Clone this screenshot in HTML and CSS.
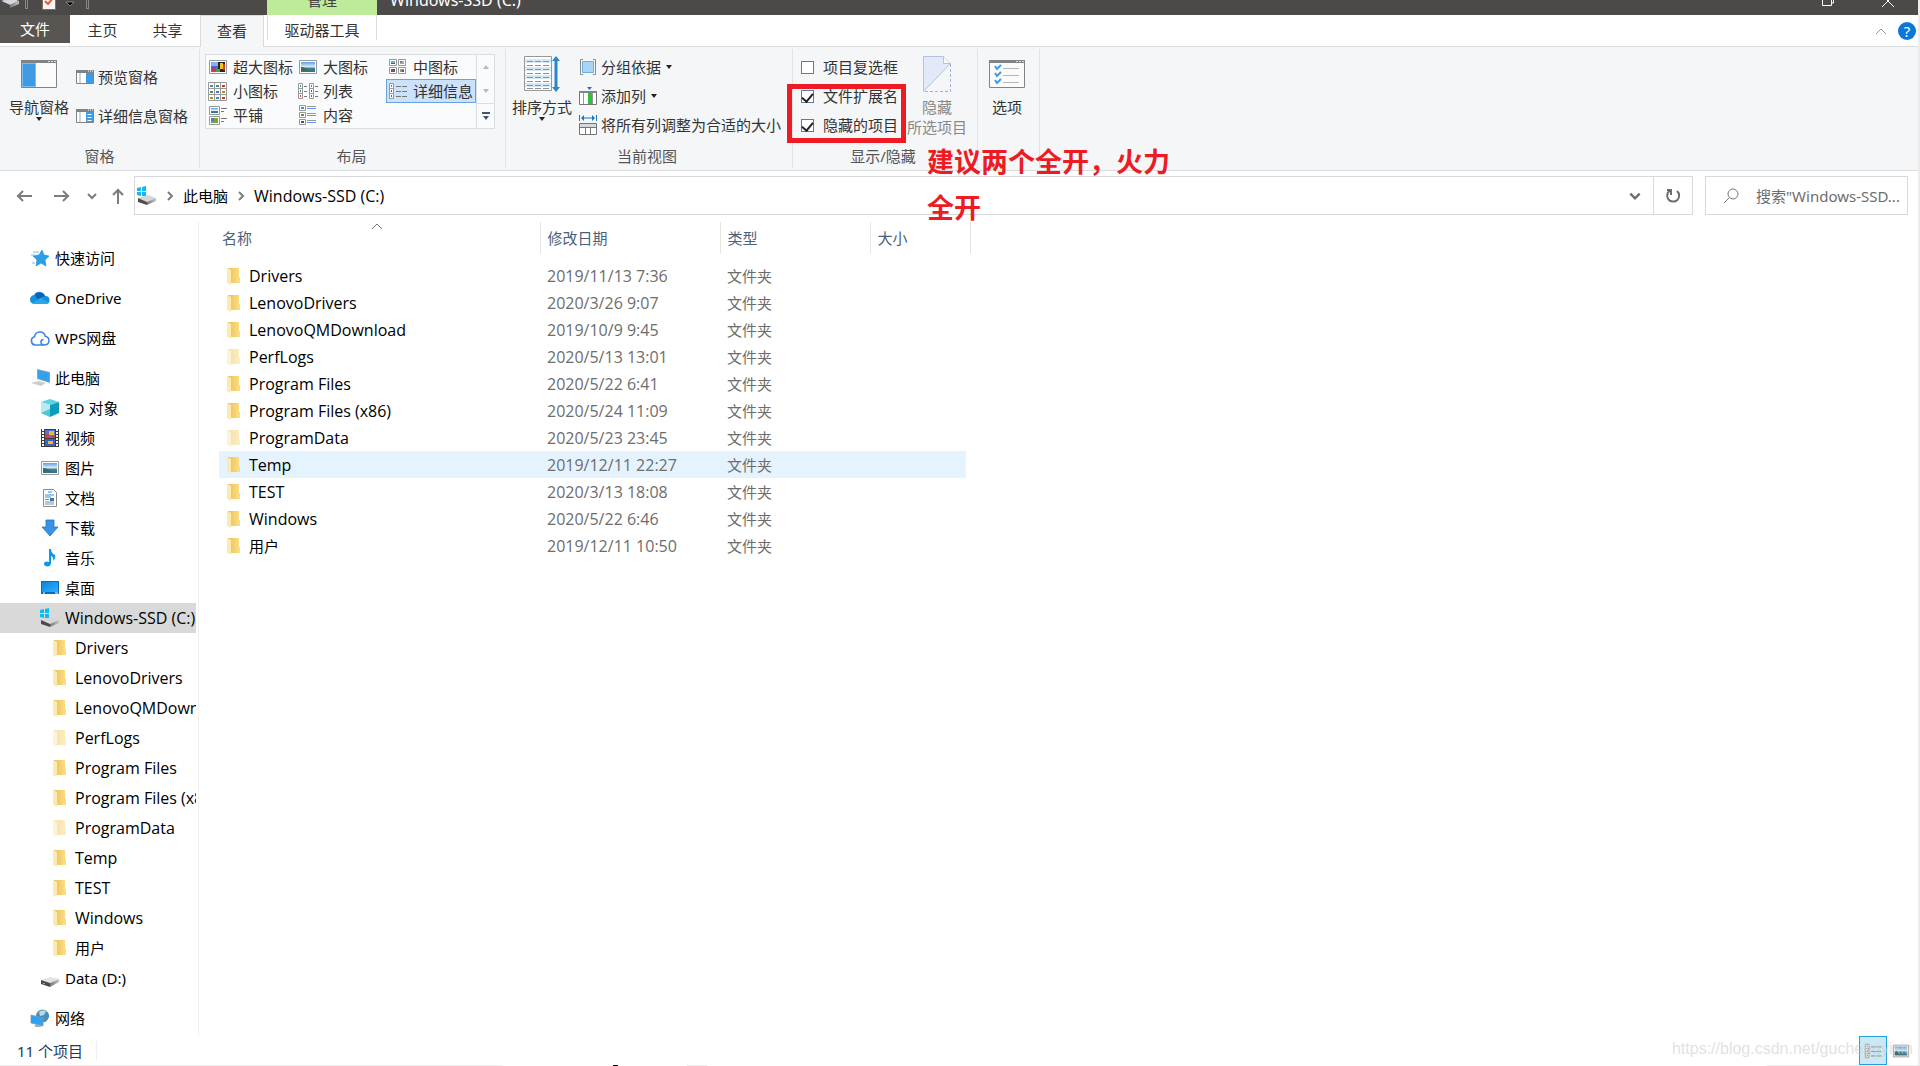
FILE: index.html
```html
<!DOCTYPE html>
<html lang="zh-CN">
<head>
<meta charset="utf-8">
<title>Windows-SSD (C:)</title>
<link rel="stylesheet" href="styles.css">
</head>
<body>
<svg class="sprite" aria-hidden="true">
  <defs>
    <linearGradient id="gFold" x1="0" x2="1"><stop offset="0" stop-color="#e9c35c"/><stop offset="1" stop-color="#fbdc80"/></linearGradient>
    <linearGradient id="gSky" x1="0" y1="0" x2="0" y2="1"><stop offset="0" stop-color="#5aa0e6"/><stop offset=".5" stop-color="#dff0fa"/><stop offset=".6" stop-color="#4d7f86"/><stop offset="1" stop-color="#2f6f9c"/></linearGradient>
    <linearGradient id="gDrive" x1="0" x2="1"><stop offset="0" stop-color="#777"/><stop offset="1" stop-color="#c4c4c4"/></linearGradient>
    <linearGradient id="gBlue" x1="0" y1="0" x2="1" y2="1"><stop offset="0" stop-color="#0a84e0"/><stop offset="1" stop-color="#2fb0ff"/></linearGradient>
  </defs>
  <symbol id="folder" viewBox="0 0 20 20"><path d="M4 2h11v15H7z" fill="url(#gFold)"/><path d="M13 11h3v6h-3z" fill="#fbdc80"/><path d="M3 2l4 2v15l-4-2z" fill="#fdeab0"/></symbol>
  <symbol id="drive" viewBox="0 0 20 20"><path d="M1 12l9-3 9 2-9 4z" fill="#e2e3e6"/><path d="M1 12l9 3v4l-9-3z" fill="#4b4b4b"/><path d="M10 15l9-4v3l-9 5z" fill="url(#gDrive)"/><path d="M3 15h2v1H3z" fill="#3fe06a"/></symbol>
  <symbol id="drivewin" viewBox="0 0 20 20"><path d="M1 12l10-3 8 3-9 4z" fill="#d4d6da"/><path d="M1 12l9 4v3l-9-3z" fill="#4b4b4b"/><path d="M10 16l9-4v3l-9 4z" fill="url(#gDrive)"/><path d="M0 2l4-1v4H0zM5 1l4-1v5H5zM0 6h4v4l-4-1zM5 6h4v4H5z" fill="#0bbcf2"/></symbol>
  <symbol id="star" viewBox="0 0 20 20"><path d="M12 2l2 5 5 1-4 4 1 6-5-3-5 3 1-6-4-4 6-1z" fill="#2d9fe8" stroke="#1585cf" stroke-width=".6"/><path d="M3 4h6M1 7h4M2 15h3" stroke="#6dbdf0"/></symbol>
  <symbol id="onedrive" viewBox="0 0 20 20"><path d="M5 16a4.500 4.500 0 01-1-9 6 6 0 0111 1 4 4 0 011 8z" fill="#1490df"/><path d="M5 7a6 6 0 0110 1l-8 3z" fill="#0b5fb4"/><path d="M2 15l9-5 8 5a4 4 0 01-3 1H5z" fill="#28a8ea"/></symbol>
  <symbol id="wps" viewBox="0 0 20 20"><path d="M15 17H5a4.200 4.200 0 01-.5-8.200 5.500 5.500 0 0110.800-.5 4.400 4.400 0 01-.3 8.700c-3 0-4-1.500-4-3s1-2.500 2.500-2.500" fill="none" stroke="#3f83f0" stroke-width="1.600"/></symbol>
  <symbol id="pc" viewBox="0 0 20 20"><path d="M7 1l13 3v11L7 11z" fill="#8fa3b3"/><path d="M8 2l11 3v9L8 10z" fill="#30a3f0"/><path d="M1 15l8-2 7 2-5 3z" fill="#c9ced3"/></symbol>
  <symbol id="cube" viewBox="0 0 20 20"><path d="M1 4l9-3 9 3-9 3z" fill="#5fd3e0"/><path d="M1 4l9 3v12l-9-4z" fill="#b5ecf0"/><path d="M10 7l9-3v11l-9 4z" fill="#0d9cc0"/><path d="M1 15l9-4v8z" fill="#4fc8d4"/></symbol>
  <symbol id="film" viewBox="0 0 20 20"><path d="M1 1h18v18H1z" fill="#3a3a3a"/><path d="M3 1v18M17 1v18" stroke="#fff" stroke-width="2" stroke-dasharray="2 1"/><path d="M5 2h10v8H5z" fill="#4a78d8"/><path d="M5 11h10v7H5z" fill="#3b62c4"/><path d="M9 3h5v4H9zM8 13h5v3H8z" fill="#f0bb2b"/><path d="M5 6h4v3H5zM12 8h3v2h-3z" fill="#c43e55"/></symbol>
  <symbol id="pic" viewBox="0 0 20 20"><path d="M1.500 3.500h17v13h-17z" fill="#fff" stroke="#999"/><path d="M3 5h14v10H3z" fill="url(#gSky)"/><path d="M3 10q5 0 8 4H3z" fill="#3c6e5c"/></symbol>
  <symbol id="doc" viewBox="0 0 20 20"><path d="M3.500 1.500h10l3 3v14h-13z" fill="#fff" stroke="#8a8a8a"/><path d="M5 14h9M5 16h9M5 11.500h4" stroke="#7c8c9c"/><path d="M8 4h4M5 7h9M5 9h6" stroke="#2f8fd8"/><path d="M10 10h4v3h-4z" fill="#3576b5"/></symbol>
  <symbol id="down" viewBox="0 0 20 20"><path d="M6 2h8v7h4l-8 9-8-9h4z" fill="#3793e4" stroke="#2274bf" stroke-width=".8"/></symbol>
  <symbol id="note" viewBox="0 0 20 20"><path d="M9 1h2q0 4 4 6c1 3-1 5-2 6q1-4-2-5v7c0 5-7 4-7 1s3-3 5-2z" fill="#0a97ef"/></symbol>
  <symbol id="desk" viewBox="0 0 20 20"><path d="M1 3h18v13H1z" fill="#0a6cb8"/><path d="M2 4h16v10H2z" fill="url(#gBlue)"/><path d="M3 15h2M15 15h3" stroke="#fff"/></symbol>
  <symbol id="net" viewBox="0 0 20 20"><circle cx="12.500" cy="8" r="6.500" fill="#4d8fb0"/><path d="M9 4q3-3 7-1l-2 4-4 1z" fill="#b6dbe8"/><path d="M1 7l12 3v8L1 15z" fill="#2fa3f2" stroke="#7d98ab" stroke-width=".8"/><path d="M5 18h6" stroke="#aaa" stroke-width="2"/></symbol>
  <symbol id="pPrev" viewBox="0 0 18 14"><path d="M.5.5h17v13H.5z" fill="#fff" stroke="#808488"/><path d="M0 0h18v3H0z" fill="#808488"/><path d="M4 3v10" stroke="#a8a8a8"/><path d="M10 3h7v10h-7z" fill="#3f9ae4"/><path d="M12 1h1M14 1h1M16 1h1" stroke="#fff"/></symbol>
  <symbol id="pDet" viewBox="0 0 18 14"><use href="#pPrev"/><path d="M11.500 5.500h4M11.500 8.500h4M11.500 11.500h4" stroke="#fff"/></symbol>
  <symbol id="nav" viewBox="0 0 36 28"><path d="M.5.5h35v27H.5z" fill="#fbfbfb" stroke="#808488"/><path d="M0 0h36v3H0z" fill="#808488"/><path d="M1 3h14v24H1z" fill="#7dbdf0"/><path d="M2 4h12v22H2z" fill="#3f9ae4"/><path d="M27 1.500h2M30 1.500h2M33 1.500h2" stroke="#ddd"/></symbol>
  <symbol id="vXl" viewBox="0 0 20 20"><path d="M1.500 3.500h17v13h-17z" fill="#fff" stroke="#999"/><path d="M3 5h14v10H3z" fill="#3d6fd8"/><path d="M3 5h7v4H3z" fill="#7fb4ee"/><path d="M10 5h7v10h-7z" fill="#2b2320"/><path d="M12 6h3v6h-3z" fill="#f6c21c"/><path d="M3 10h5v4H3z" fill="#c43a62"/><path d="M8 12h4v3H8z" fill="#41a44a"/><path d="M15 7h2v6h-2z" fill="#cf3b22"/></symbol>
  <symbol id="vMd" viewBox="0 0 20 20"><path d="M1.500 2.500h7v6h-7zM10.500 2.500h7v6h-7zM1.500 10.500h7v6h-7zM10.500 10.500h7v6h-7z" fill="#fff" stroke="#999"/><path d="M3 4h4v3H3z" fill="#6fb0d4"/><path d="M3 6h4v1H3z" fill="#35677a"/><path d="M12 4h4v3h-4z" fill="#a9b84c"/><path d="M12 4h2v2h-2z" fill="#5c8ae0"/><path d="M3 12h4v3H3z" fill="#c8362a"/><path d="M12 12h4v3h-4z" fill="#d08c28"/><path d="M5 12h2v2H5zM14 13h2v2h-2z" fill="#3d55b8"/></symbol>
  <symbol id="vSm" viewBox="0 0 20 20"><path d="M.5 1.500h18v18H.5zM6.500 1v18M12.500 1v18M0 7.500h18M0 13.500h18" fill="#fff" stroke="#999"/><path d="M2 4h3v2H2zM8 16h3v2H8z" fill="#3f8fb8"/><path d="M8 4h3v2H8zM2 10h3v2H2z" fill="#4f8f6c"/><path d="M14 4h3v2h-3zM14 16h3v2h-3z" fill="#c8362a"/><path d="M8 10h3v2H8z" fill="#4a78d8"/><path d="M14 10h3v2h-3zM2 16h3v2H2z" fill="#a89028"/></symbol>
  <symbol id="vLs" viewBox="0 0 20 20"><path d="M.5 2.500h4v15h-4zM11.500 2.500h4v15h-4zM0 7.500h5M0 12.500h5M11 7.500h5M11 12.500h5" fill="#fff" stroke="#999"/><path d="M2 4h1v2H2zM13 4h1v2h-1z" fill="#3f8fb8"/><path d="M2 9h1v2H2zM13 9h1v2h-1z" fill="#457a3c"/><path d="M2 14h1v2H2zM13 14h1v2h-1z" fill="#c8362a"/><path d="M6 5.500h3M6 10.500h3M6 15.500h3M17 5.500h3M17 10.500h3M17 15.500h3" stroke="#777"/></symbol>
  <symbol id="vDt" viewBox="0 0 20 20"><path d="M1.500 2.500h4v15h-4zM1 7.500h5M1 12.500h5" fill="#fff" stroke="#999"/><path d="M3 4h1v2H3z" fill="#3f8fb8"/><path d="M3 9h1v2H3z" fill="#457a3c"/><path d="M3 14h1v2H3z" fill="#c8362a"/><path d="M8 5.500h5M14 5.500h5M8 10.500h5M14 10.500h5M8 15.500h5M14 15.500h5" stroke="#777"/></symbol>
  <symbol id="vTl" viewBox="0 0 20 20"><path d="M1.500 1.500h10v8h-10zM1.500 11.500h10v8h-10z" fill="#fff" stroke="#999"/><path d="M3 3h7v5H3z" fill="url(#gSky)"/><path d="M3 13h7v5H3z" fill="#7aa53a"/><path d="M3 13h3v3H3z" fill="#4a78d8"/><path d="M13 3.500h6M13 6.500h3M13 13.500h6M13 16.500h3" stroke="#777"/></symbol>
  <symbol id="vCt" viewBox="0 0 20 20"><path d="M1.500.500h6v5h-6zM1.500 7.500h6v5h-6zM1.500 14.500h6v5h-6z" fill="#fff" stroke="#999"/><path d="M3 2h3v2H3z" fill="#3f8fb8"/><path d="M3 9h3v2H3z" fill="#7a8f3c"/><path d="M3 16h3v2H3z" fill="#35577a"/><path d="M9 3.500h9M9 10.500h9M9 17.500h9" stroke="#5c9cf0"/><path d="M9 1.500h9M9 8.500h9M9 15.500h9" stroke="#999"/></symbol>
  <symbol id="sort" viewBox="0 0 38 36"><path d="M1.500.5h27v34h-27z" fill="#fff" stroke="#999"/><path d="M2 3h26v4H2zM2 11h26v4H2zM2 19h26v4H2zM2 27h26v4H2z" fill="#d5e9f5"/><path d="M4 5.500h22M4 9.500h22M4 13.500h22M4 17.500h22M4 21.500h22M4 25.500h22M4 29.500h22M4 32.500h22" stroke="#8b9299" stroke-dasharray="6 2"/><path d="M33 2v31" stroke="#2b86cf" stroke-width="3"/><path d="M33 0l4 5h-8zM33 36l4-5h-8z" fill="#2b86cf"/></symbol>
  <symbol id="grp" viewBox="0 0 20 20"><path d="M5 2.500H2.500v15H5M15 2.500h2.500v15H15" fill="none" stroke="#8a8a8a"/><path d="M4.500 4.500h11v11h-11z" fill="#a8d4f5" stroke="#6fb0e3"/></symbol>
  <symbol id="addc" viewBox="0 0 20 20"><path d="M1.500 5.500h17v13h-17z" fill="#fff" stroke="#777"/><path d="M1 5h18v2H1z" fill="#808488"/><path d="M5.500 7v11M14.500 7v11" stroke="#999"/><path d="M10 7h4v11h-4z" fill="#2cc23c"/><path d="M9 1h5l-2.500 3z" fill="#2274b8"/></symbol>
  <symbol id="fitc" viewBox="0 0 20 20"><path d="M1.500 0v6M18.500 0v6M4 3h12" stroke="#2274b8"/><path d="M3 3l3-3v6zM17 3l-3-3v6z" fill="#2274b8"/><path d="M1.500 8.500h17v11h-17zM7.500 12v7M12.500 12v7" fill="#fff" stroke="#777"/><path d="M2 9h16v3H2z" fill="#d6d8da"/><path d="M1 12.500h18" stroke="#777"/></symbol>
  <symbol id="hide" viewBox="0 0 28 36"><path d="M.5.5h20l7 7-27 28z" fill="#e2e9f8" stroke="#b3c3e0"/><path d="M20.500.5v7h7" fill="#f5f8fd" stroke="#b3c3e0"/><path d="M27.500 8v27.500H1" fill="none" stroke="#9fb0d0" stroke-dasharray="3 2"/></symbol>
  <symbol id="opt" viewBox="0 0 36 28"><path d="M.5.5h35v27H.5z" fill="#fbfbfb" stroke="#808488"/><path d="M0 0h36v3H0z" fill="#808488"/><path d="M27 1.500h2M30 1.500h2M33 1.500h2" stroke="#ddd"/><path d="M6 6l2 3 4-4M6 13l2 3 4-4M6 20l2 3 4-4" fill="none" stroke="#3f9ae4" stroke-width="2"/><path d="M14 8.500h16M14 15.500h16M14 22.500h16" stroke="#b5b5b5"/></symbol>
  <symbol id="chev" viewBox="0 0 12 12"><path d="M2 4l4 4 4-4" fill="none" stroke="currentColor" stroke-width="2"/></symbol>
  <symbol id="up" viewBox="0 0 12 8"><path d="M1 7l5-5 5 5" fill="none" stroke="currentColor"/></symbol>
  <symbol id="crumb" viewBox="0 0 12 12"><path d="M4 2l4 4-4 4" fill="none" stroke="currentColor" stroke-width="2"/></symbol>
</svg>

<div class="window">
  <header class="titlebar">
    <svg class="tb-drive" viewBox="0 0 20 20"><use href="#drivewin"/></svg>
    <span class="tb-sep"></span>
    <svg class="tb-clip" viewBox="0 0 14 16"><path d="M0 0h14v16H0z" fill="#8b6a55"/><path d="M1 0h12v15H1z" fill="#f6f6f6"/><path d="M3 7l3 3 5-6" fill="none" stroke="#f0562a" stroke-width="2"/></svg>
    <svg class="tb-more" viewBox="0 0 8 8"><path d="M1 0h6M0 3h8L4 7z" fill="#000" stroke="#ddd" stroke-width=".5"/></svg>
    <span class="tb-sep"></span>
    <span class="tb-context">管理</span>
    <h1 class="tb-title">Windows-SSD (C:)</h1>
    <button class="tb-btn" aria-label="还原"><svg viewBox="0 0 12 12"><path d="M.5 2.500h9v9h-9zM2 .5h9.500V9H10" fill="none" stroke="#fff"/></svg></button>
    <button class="tb-btn" aria-label="关闭"><svg viewBox="0 0 12 12"><path d="M0 0l12 12M12 0L0 12" stroke="#fff"/></svg></button>
  </header>

  <nav class="tabs">
    <button class="tab file">文件</button>
    <button class="tab home">主页</button>
    <button class="tab">共享</button>
    <button class="tab active">查看</button>
    <button class="tab context">驱动器工具</button>
    <button class="collapse" aria-label="折叠功能区"><svg viewBox="0 0 12 8"><use href="#up"/></svg></button>
    <button class="help" aria-label="帮助">?</button>
  </nav>

  <section class="ribbon">
    <div class="group g-panes">
      <div class="group-body">
        <button class="big"><svg class="i36" viewBox="0 0 36 28"><use href="#nav"/></svg><span>导航窗格</span><i class="caret"></i></button>
        <div class="stack panes">
          <button class="cmd"><svg class="i18" viewBox="0 0 18 14"><use href="#pPrev"/></svg>预览窗格</button>
          <button class="cmd"><svg class="i18" viewBox="0 0 18 14"><use href="#pDet"/></svg>详细信息窗格</button>
        </div>
      </div>
      <h2>窗格</h2>
    </div>
    <div class="group g-layout">
      <div class="group-body">
        <div class="gallery">
          <div class="views">
            <button><svg><use href="#vXl"/></svg>超大图标</button>
            <button><svg><use href="#pic"/></svg>大图标</button>
            <button><svg><use href="#vMd"/></svg>中图标</button>
            <button><svg><use href="#vSm"/></svg>小图标</button>
            <button><svg><use href="#vLs"/></svg>列表</button>
            <button class="on"><svg><use href="#vDt"/></svg>详细信息</button>
            <button><svg><use href="#vTl"/></svg>平铺</button>
            <button><svg><use href="#vCt"/></svg>内容</button>
          </div>
          <div class="scroller">
            <button aria-label="上一行"><i class="caret flip dim"></i></button>
            <button aria-label="下一行"><i class="caret dim"></i></button>
            <button aria-label="更多" class="more"><i class="caret"></i></button>
          </div>
        </div>
      </div>
      <h2>布局</h2>
    </div>
    <div class="group g-view">
      <div class="group-body">
        <button class="big sort"><svg class="i38" viewBox="0 0 38 36"><use href="#sort"/></svg><span>排序方式</span><i class="caret"></i></button>
        <div class="stack">
          <button class="cmd"><svg class="i20"><use href="#grp"/></svg>分组依据<i class="caret"></i></button>
          <button class="cmd"><svg class="i20"><use href="#addc"/></svg>添加列<i class="caret"></i></button>
          <button class="cmd"><svg class="i20"><use href="#fitc"/></svg>将所有列调整为合适的大小</button>
        </div>
      </div>
      <h2>当前视图</h2>
    </div>
    <div class="group g-show">
      <div class="group-body">
        <div class="stack checks">
          <label><input type="checkbox">项目复选框</label>
          <label><input type="checkbox" checked>文件扩展名</label>
          <label><input type="checkbox" checked>隐藏的项目</label>
          <div class="mark-box"></div>
        </div>
        <button class="big hide" disabled><svg class="i28" viewBox="0 0 28 36"><use href="#hide"/></svg><span>隐藏<br>所选项目</span></button>
      </div>
      <h2>显示/隐藏</h2>
      <p class="mark-note">建议两个全开，火力<br>全开</p>
    </div>
    <div class="group g-opt">
      <div class="group-body">
        <button class="big"><svg class="i36" viewBox="0 0 36 28"><use href="#opt"/></svg><span>选项</span></button>
      </div>
    </div>
  </section>

  <div class="addressbar">
    <div class="history">
      <button aria-label="后退"><svg viewBox="0 0 16 16"><path d="M16 8H1M7 3L2 8l5 5" fill="none" stroke="currentColor" stroke-width="2"/></svg></button>
      <button aria-label="前进"><svg viewBox="0 0 16 16"><path d="M0 8h15M9 3l5 5-5 5" fill="none" stroke="currentColor" stroke-width="2"/></svg></button>
      <button class="small" aria-label="最近位置"><svg viewBox="0 0 12 12"><use href="#chev"/></svg></button>
      <button aria-label="上移"><svg viewBox="0 0 16 16"><path d="M8 16V1M3 7l5-5 5 5" fill="none" stroke="currentColor" stroke-width="2"/></svg></button>
    </div>
    <div class="path">
      <svg class="i20"><use href="#drivewin"/></svg>
      <svg class="sep"><use href="#crumb"/></svg>
      <a href="#">此电脑</a>
      <svg class="sep"><use href="#crumb"/></svg>
      <a class="latin" href="#">Windows-SSD (C:)</a>
      <button class="drop" aria-label="以前的位置"><svg viewBox="0 0 12 12"><use href="#chev"/></svg></button>
      <button class="refresh" aria-label="刷新"><svg viewBox="0 0 16 16"><path d="M12 3a6 6 0 11-7-.5M2 2h4v5" fill="none" stroke="currentColor" stroke-width="2"/></svg></button>
    </div>
    <label class="search">
      <svg viewBox="0 0 16 16"><circle cx="10" cy="6" r="5" fill="none" stroke="#777"/><path d="M6 10l-5 5" stroke="#777"/></svg>
      <input type="text" aria-label="搜索" placeholder="搜索&quot;Windows-SSD...">
    </label>
  </div>

  <main class="content">
    <nav class="tree">
      <a class="l1" href="#"><svg><use href="#star"/></svg>快速访问</a>
      <a class="l1" href="#"><svg><use href="#onedrive"/></svg>OneDrive</a>
      <a class="l1" href="#"><svg><use href="#wps"/></svg>WPS网盘</a>
      <a class="l1" href="#"><svg><use href="#pc"/></svg>此电脑</a>
      <a class="l2" href="#"><svg><use href="#cube"/></svg>3D 对象</a>
      <a class="l2" href="#"><svg><use href="#film"/></svg>视频</a>
      <a class="l2" href="#"><svg><use href="#pic"/></svg>图片</a>
      <a class="l2" href="#"><svg><use href="#doc"/></svg>文档</a>
      <a class="l2" href="#"><svg><use href="#down"/></svg>下载</a>
      <a class="l2" href="#"><svg><use href="#note"/></svg>音乐</a>
      <a class="l2" href="#"><svg><use href="#desk"/></svg>桌面</a>
      <a class="l2 latin current" href="#"><svg><use href="#drivewin"/></svg>Windows-SSD (C:)</a>
      <a class="l3 latin" href="#"><svg><use href="#folder"/></svg>Drivers</a>
      <a class="l3 latin" href="#"><svg><use href="#folder"/></svg>LenovoDrivers</a>
      <a class="l3 latin" href="#"><svg><use href="#folder"/></svg>LenovoQMDownload</a>
      <a class="l3 latin hid" href="#"><svg><use href="#folder"/></svg>PerfLogs</a>
      <a class="l3 latin" href="#"><svg><use href="#folder"/></svg>Program Files</a>
      <a class="l3 latin" href="#"><svg><use href="#folder"/></svg>Program Files (x86)</a>
      <a class="l3 latin hid" href="#"><svg><use href="#folder"/></svg>ProgramData</a>
      <a class="l3 latin" href="#"><svg><use href="#folder"/></svg>Temp</a>
      <a class="l3 latin" href="#"><svg><use href="#folder"/></svg>TEST</a>
      <a class="l3 latin" href="#"><svg><use href="#folder"/></svg>Windows</a>
      <a class="l3" href="#"><svg><use href="#folder"/></svg>用户</a>
      <a class="l2" href="#"><svg><use href="#drive"/></svg>Data (D:)</a>
      <a class="l1" href="#"><svg><use href="#net"/></svg>网络</a>
    </nav>
    <table class="files">
      <colgroup><col class="c-name"><col class="c-date"><col class="c-type"><col class="c-size"><col class="c-end"></colgroup>
      <thead><tr><th>名称<svg class="sorted" viewBox="0 0 12 8"><use href="#up"/></svg></th><th>修改日期</th><th>类型</th><th colspan="2">大小</th></tr></thead>
      <tbody>
        <tr><td><span class="latin"><svg><use href="#folder"/></svg>Drivers</span></td><td class="latin">2019/11/13 7:36</td><td>文件夹</td><td></td></tr>
        <tr><td><span class="latin"><svg><use href="#folder"/></svg>LenovoDrivers</span></td><td class="latin">2020/3/26 9:07</td><td>文件夹</td><td></td></tr>
        <tr><td><span class="latin"><svg><use href="#folder"/></svg>LenovoQMDownload</span></td><td class="latin">2019/10/9 9:45</td><td>文件夹</td><td></td></tr>
        <tr class="hid"><td><span class="latin"><svg><use href="#folder"/></svg>PerfLogs</span></td><td class="latin">2020/5/13 13:01</td><td>文件夹</td><td></td></tr>
        <tr><td><span class="latin"><svg><use href="#folder"/></svg>Program Files</span></td><td class="latin">2020/5/22 6:41</td><td>文件夹</td><td></td></tr>
        <tr><td><span class="latin"><svg><use href="#folder"/></svg>Program Files (x86)</span></td><td class="latin">2020/5/24 11:09</td><td>文件夹</td><td></td></tr>
        <tr class="hid"><td><span class="latin"><svg><use href="#folder"/></svg>ProgramData</span></td><td class="latin">2020/5/23 23:45</td><td>文件夹</td><td></td></tr>
        <tr class="hover"><td><span class="latin"><svg><use href="#folder"/></svg>Temp</span></td><td class="latin">2019/12/11 22:27</td><td>文件夹</td><td></td></tr>
        <tr><td><span class="latin"><svg><use href="#folder"/></svg>TEST</span></td><td class="latin">2020/3/13 18:08</td><td>文件夹</td><td></td></tr>
        <tr><td><span class="latin"><svg><use href="#folder"/></svg>Windows</span></td><td class="latin">2020/5/22 6:46</td><td>文件夹</td><td></td></tr>
        <tr><td><span><svg><use href="#folder"/></svg>用户</span></td><td class="latin">2019/12/11 10:50</td><td>文件夹</td><td></td></tr>
      </tbody>
    </table>
  </main>

  <footer class="status">
    <span class="count">11 个项目</span>
    <button class="mode on" aria-label="详细信息"><svg><use href="#vDt"/></svg></button>
    <button class="mode" aria-label="大图标"><svg><use href="#pic"/></svg></button>
    <span class="watermark">https://blog.csdn.net/guchengyixin</span>
  </footer>
  <div class="edge"></div>
</div>
</body>
</html>
```
FILE: styles.css
```css
* { box-sizing: border-box; }
body {
  margin: 0;
  background: #fff;
  color: #000;
  font: 15px/20px "Noto Sans", "Noto Sans CJK SC", sans-serif;
}
button {
  margin: 0;
  padding: 0;
  border: 0;
  background: none;
  color: inherit;
  font: inherit;
  white-space: nowrap;
}
a { color: inherit; text-decoration: none; }
h1, h2, p { margin: 0; font: inherit; }
svg { display: block; flex: none; }
.sprite { position: absolute; width: 0; height: 0; }
.latin { font-family: "Open Sans", sans-serif; font-size: 16px; }

.window {
  display: flex;
  flex-direction: column;
  min-height: 100vh;
  border-right: 2px solid #ececec;
}

.i18 { width: 18px; height: 14px; }
.i20 { width: 20px; height: 20px; }
.i28 { width: 28px; height: 36px; }
.i36 { width: 36px; height: 28px; }
.i38 { width: 38px; height: 36px; }

.caret {
  width: 0;
  border: 3px solid transparent;
  border-top: 4px solid #222;
  border-bottom: 0;
}
.caret.flip { transform: rotate(180deg); }
.caret.dim { border-top-color: #b4b9c4; }

/* title bar */
.titlebar {
  display: flex;
  align-items: flex-end;
  height: 15px;
  overflow: hidden;
  background: #4c4a48;
  color: #fff;
}
.tb-drive { width: 20px; height: 20px; margin-bottom: 6px; }
.tb-sep { width: 3px; height: 9px; margin: 0 14px 6px 5px; border: 1px solid #8a8886; border-top: 0; }
.tb-clip { width: 14px; height: 16px; margin: 0 10px 5px 0; }
.tb-more { width: 8px; height: 8px; margin: 0 7px 8px 0; }
.tb-context {
  width: 110px;
  margin-left: 164px;
  padding-bottom: 5px;
  background: #bdeb9a;
  color: #444;
  text-align: center;
}
.tb-title { flex: 1; padding: 0 13px 5px; font-size: 16px; }
.tb-btn { width: 60px; padding: 0 24px 9px; }
.tb-btn svg { width: 12px; height: 12px; }
.tb-btn:last-child { padding-bottom: 8px; }

/* tabs */
.tabs {
  display: flex;
  height: 32px;
  border-bottom: 1px solid #dadbdc;
  color: #333;
}
.tab { width: 65px; height: 30px; }
.tab.file { width: 70px; height: 28px; background: #585553; color: #fff; }
.tab.active {
  width: 64px;
  height: 32px;
  padding-bottom: 1px;
  border: 1px solid #dadbdc;
  border-bottom: 0;
  background: #f5f6f8;
}
.tab.context { width: 110px; height: 25px; margin-left: 3px; padding-top: 5px; border: solid #dadbdc; border-width: 0 1px; }
.collapse { margin-left: auto; width: 12px; color: #999; }
.collapse svg { width: 12px; height: 8px; }
.help {
  align-self: center;
  width: 18px;
  height: 18px;
  margin: 0 2px 0 11px;
  border-radius: 50%;
  background: #0b78d8;
  color: #fff;
  line-height: 18px;
}

/* ribbon */
.ribbon {
  display: flex;
  height: 124px;
  padding: 2px 0;
  border-bottom: 1px solid #dadbdc;
  background: #f5f6f8;
  color: #333;
}
.group { display: flex; flex-direction: column; border-right: 1px solid #e1e3e5; }
.group-body { display: flex; flex: 1; }
.group h2 { height: 22px; color: #555; text-align: center; }
.g-panes { width: 200px; }
.g-layout { width: 306px; padding: 5px 7px 0 5px; }
.g-view { width: 287px; }
.g-view h2, .g-show h2 { padding-right: 4px; }
.g-show { position: relative; width: 185px; }
.g-opt { width: 62px; }
.big { display: flex; flex-direction: column; align-items: center; width: 60px; padding-top: 11px; }
.big span { margin-top: 9px; }
.big.sort, .big.hide { padding-top: 7px; }
.big.sort span, .big.hide span { margin-top: 5px; }
.g-panes .big { margin-left: 9px; }
.g-view .big { margin-left: 6px; }
.g-opt .big { margin-left: -1px; }
.big.hide { margin-left: 9px; color: #888; }
.stack { display: flex; flex-direction: column; gap: 9px; padding: 8px 0 0 6px; }
.cmd { display: flex; align-items: center; height: 20px; gap: 3px; }
.cmd .caret { margin-left: 2px; }
.panes { gap: 19px; padding: 18px 0 0 7px; }
.panes .cmd { gap: 4px; }

.gallery { display: flex; height: 75px; border: 1px solid #dadde1; background: #fafbfc; }
.views { display: grid; grid-template-columns: repeat(3, 90px); grid-auto-rows: 24px; }
.views button { display: flex; align-items: center; gap: 5px; padding-left: 1px; border: 1px solid transparent; }
.views svg { width: 20px; height: 20px; }
.views .on { border-color: #66a3e0; background: #cce2fb; }
.scroller { display: flex; flex-direction: column; width: 18px; border-left: 1px solid #dadde1; }
.scroller button { display: flex; flex: 1; flex-direction: column; align-items: center; justify-content: center; gap: 2px; }
.scroller .more { border-top: 1px solid #dadde1; }
.more::before { content: ""; width: 8px; height: 2px; background: #44546a; }
.more .caret { border-top-color: #44546a; }

.checks { position: relative; padding-left: 8px; }
.checks label { display: flex; align-items: center; gap: 9px; white-space: nowrap; }
.checks input {
  display: grid;
  place-items: center;
  width: 13px;
  height: 13px;
  margin: 0;
  border: 1px solid #6478a8;
  background: #fff;
  appearance: none;
}
.checks input:checked::before {
  content: "";
  width: 5px;
  height: 9px;
  border: solid #222;
  border-width: 0 2px 2px 0;
  transform: rotate(40deg);
}
.mark-box { position: absolute; top: 35px; left: -6px; width: 119px; height: 59px; border: 5px solid #ed1c24; }
.mark-note {
  position: absolute;
  top: 89px;
  left: 134px;
  color: #ed1c24;
  font: bold 27px/46px "Noto Sans CJK SC", sans-serif;
  white-space: nowrap;
}

/* address bar */
.addressbar { display: flex; padding: 5px 10px 0 0; }
.history { display: flex; align-items: center; gap: 22px; width: 134px; padding-left: 16px; color: #7c7c7c; }
.history svg { width: 16px; height: 16px; }
.history .small { margin: 0 -10px 0 -6px; }
.history .small svg { width: 12px; height: 12px; }
.path { display: flex; flex: 1; align-items: center; height: 39px; padding-left: 2px; border: 1px solid #d9d9d9; }
.path .sep { width: 12px; height: 12px; margin: 0 7px; color: #7c7c7c; }
.drop { margin-left: auto; padding: 0 11px; color: #6c6c6c; }
.drop svg { width: 14px; height: 14px; }
.refresh { align-self: stretch; width: 39px; padding: 0 11px; border-left: 1px solid #d9d9d9; color: #6c6c6c; }
.refresh svg { width: 16px; height: 16px; }
.search { display: flex; align-items: center; gap: 17px; width: 203px; margin-left: 12px; padding-left: 17px; border: 1px solid #d9d9d9; }
.search svg { width: 16px; height: 16px; }
.search input { flex: 1; min-width: 0; padding: 0; border: 0; outline: 0; font: inherit; }
.search input::placeholder { color: #6d6d6d; }

/* content */
.content { display: flex; flex: 1; align-items: flex-start; padding-top: 7px; }
.tree { width: 199px; padding: 21px 2px 2px 0; border-right: 1px solid #f0f0f0; }
.tree a { display: flex; align-items: center; gap: 5px; height: 30px; overflow: hidden; white-space: nowrap; }
.tree svg { width: 20px; height: 20px; }
.tree .l1 { padding-left: 30px; }
.tree .l2 { padding-left: 40px; }
.tree .l3 { padding-left: 50px; }
.tree .l1 + .l1, .tree .l2 + .l1 { margin-top: 10px; }
.tree .current { background: #d9d9d9; }
.hid svg { opacity: .5; }

.files { width: 751px; margin-left: 20px; border-collapse: collapse; table-layout: fixed; }
.c-name { width: 321px; }
.c-date { width: 180px; }
.c-type { width: 150px; }
.c-size { width: 96px; }
.c-end { width: 4px; }
.files th {
  position: relative;
  height: 32px;
  padding: 0 0 0 7px;
  border-right: 1px solid #e5e5e5;
  color: #4c607a;
  font-weight: normal;
  text-align: left;
}
.files th:first-child { padding-left: 3px; }
.sorted { position: absolute; top: 0; left: 152px; width: 12px; height: 8px; color: #777; }
.files thead::after { content: ""; display: block; height: 8px; }
.files td { height: 27px; padding: 0 0 0 7px; color: #6d6d6d; }
.files td:first-child { padding-left: 5px; color: #000; }
.files td span { display: flex; align-items: center; gap: 5px; }
.files td svg { width: 20px; height: 20px; }
.hover td { background: #e5f3ff; }

/* status bar */
.status { position: relative; display: flex; height: 29px; padding-right: 3px; }
.count { width: 97px; margin: 5px auto 4px 0; padding-left: 17px; border-right: 1px solid #f0f0f0; color: #1e395b; white-space: nowrap; }
.mode { width: 28px; height: 29px; padding: 0 4px; border: 1px solid transparent; }
.mode svg { width: 18px; height: 18px; }
.mode.on { border-color: #26a0da; background: #cbe8f6; }
.watermark {
  position: absolute;
  right: 5px;
  top: 3px;
  color: rgba(205, 205, 205, .6);
  font: 16px/20px "Liberation Sans", sans-serif;
}
.edge {
  height: 1px;
  background: linear-gradient(90deg, #eee 502px, #fff 502px, #fff 613px, #000 613px, #000 618px, #fff 618px, #fff 687px, #eee 687px, #eee 707px, #fff 707px, #fff 1766px, #eee 1766px);
}
```
